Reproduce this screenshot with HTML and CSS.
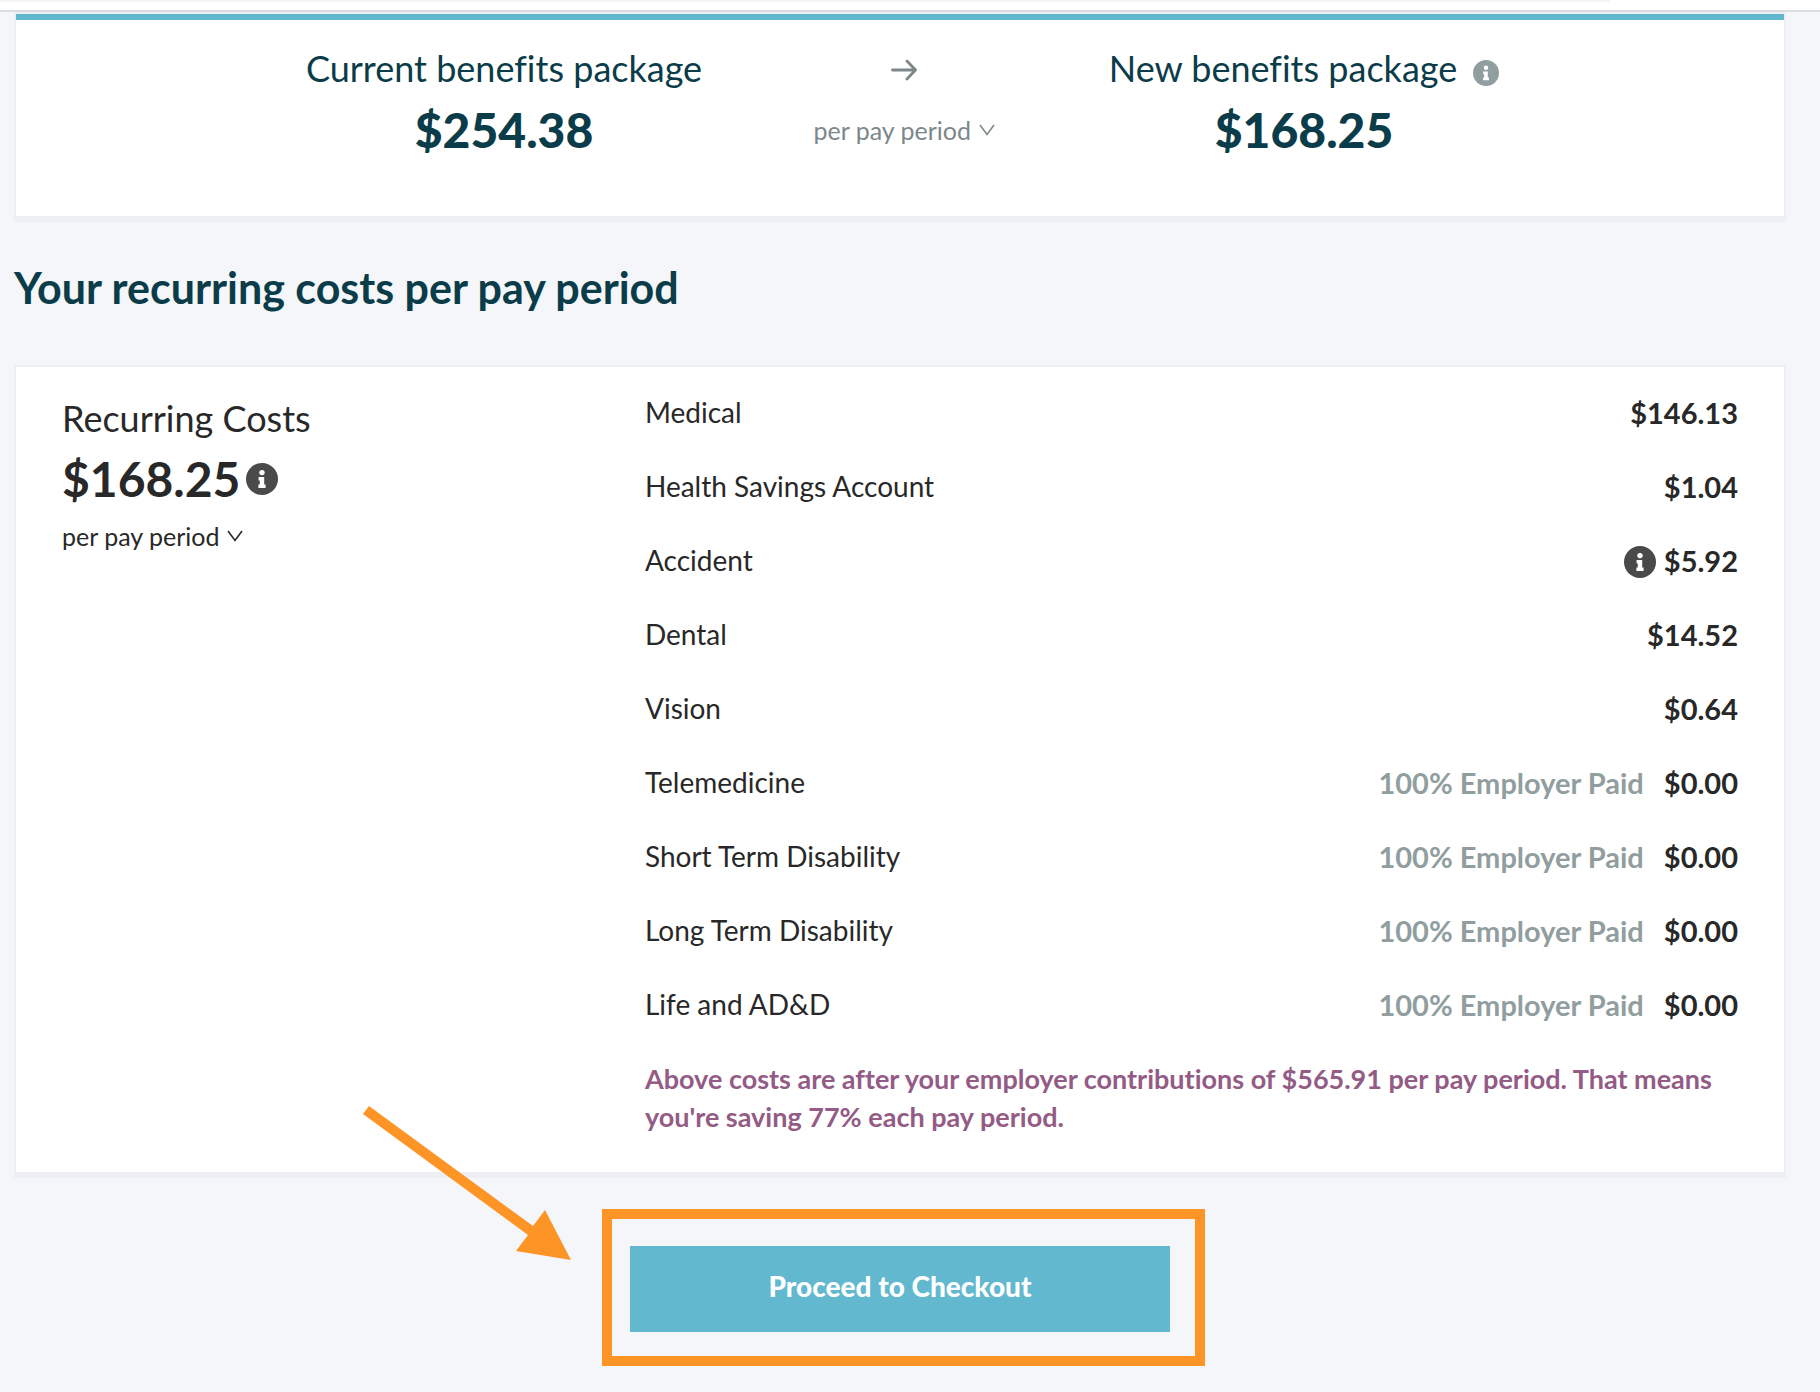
FILE: index.html
```html
<!DOCTYPE html>
<html lang="en">
  <head>
    <meta charset="UTF-8">
    <meta name="viewport" content="width=device-width,initial-scale=1">
    <link rel="stylesheet" href="styles.css">
    <title>Benefits - Review your costs</title>
  </head>
  <body>
    <svg class="sprite" aria-hidden="true">
      <symbol id="icon-info" viewBox="0 0 32 32">
        <circle cx="16" cy="16" r="16" fill="currentColor"/>
        <circle cx="16" cy="9.6" r="2.7" fill="#fff"/>
        <path d="M12.6 14h5.6v7.6h1.4V25h-7.2v-3.4h1.4v-4.2h-1.2z" fill="#fff"/>
      </symbol>
      <symbol id="icon-chevron" viewBox="0 0 16 12">
        <path d="M1 1l7 9.5 7-9.5" fill="none" stroke="currentColor" stroke-width="1.6"/>
      </symbol>
    </svg>
    <div class="browser-bar">
      <div class="address"></div>
    </div>
    <main>
      <section class="card">
        <div class="accent"></div>
        <div class="summary">
          <div class="package">
            <h2>Current benefits package</h2>
            <p class="amount">$254.38</p>
          </div>
          <div class="package between">
            <svg class="arrow-right" viewBox="0 0 26 22" aria-hidden="true">
              <path d="M1.5 11h23M16 2l8.5 9-8.5 9" fill="none" stroke="currentColor" stroke-width="2.8" stroke-linecap="round" stroke-linejoin="round"/>
            </svg>
            <div class="period">
              <select aria-label="Compare costs">
                <option>per pay period</option>
              </select>
              <svg class="chevron"><use href="#icon-chevron"/></svg>
            </div>
          </div>
          <div class="package">
            <h2>New benefits package <svg class="info"><use href="#icon-info"/></svg></h2>
            <p class="amount">$168.25</p>
          </div>
        </div>
      </section>

      <h1>Your recurring costs per pay period</h1>

      <section class="card costs">
        <div class="total">
          <h2>Recurring Costs</h2>
          <p class="amount">$168.25 <svg class="info-lg"><use href="#icon-info"/></svg></p>
          <div class="period">
            <select aria-label="Recurring costs">
              <option>per pay period</option>
            </select>
            <svg class="chevron"><use href="#icon-chevron"/></svg>
          </div>
        </div>
        <div class="breakdown">
          <table>
            <tr>
              <th scope="row">Medical</th>
              <td>$146.13</td>
            </tr>
            <tr>
              <th scope="row">Health Savings Account</th>
              <td>$1.04</td>
            </tr>
            <tr>
              <th scope="row">Accident</th>
              <td><svg class="info-lg"><use href="#icon-info"/></svg>$5.92</td>
            </tr>
            <tr>
              <th scope="row">Dental</th>
              <td>$14.52</td>
            </tr>
            <tr>
              <th scope="row">Vision</th>
              <td>$0.64</td>
            </tr>
            <tr>
              <th scope="row">Telemedicine</th>
              <td><span class="employer-paid">100% Employer Paid</span>$0.00</td>
            </tr>
            <tr>
              <th scope="row">Short Term Disability</th>
              <td><span class="employer-paid">100% Employer Paid</span>$0.00</td>
            </tr>
            <tr>
              <th scope="row">Long Term Disability</th>
              <td><span class="employer-paid">100% Employer Paid</span>$0.00</td>
            </tr>
            <tr>
              <th scope="row">Life and AD&amp;D</th>
              <td><span class="employer-paid">100% Employer Paid</span>$0.00</td>
            </tr>
          </table>
          <p class="savings">Above costs are after your employer contributions of $565.91 per pay period. That means you're saving 77% each pay period.</p>
        </div>
      </section>

      <div class="checkout">
        <button type="button">Proceed to Checkout</button>
        <div class="highlight"></div>
        <svg class="pointer" viewBox="0 0 208 154" aria-hidden="true">
          <path d="M0 8L6 0l164 120 12-16 26 50-55-9 12-16z" fill="#fd9426"/>
        </svg>
      </div>
    </main>
  </body>
</html>
```
FILE: styles.css
```css
* {
  box-sizing: border-box;
}

body {
  background-color: #f4f6fa;
  color: #282828;
  font-family: Lato, sans-serif;
  font-size: 28px;
  font-variant-ligatures: no-common-ligatures;
  margin: 0;
}

h1, h2, p {
  margin: 0;
}

.sprite {
  display: none;
}

.browser-bar {
  height: 12px;
  background-color: #fff;
  border-bottom: 2px solid #dadce0;
}

.address {
  height: 2px;
  margin-right: 210px;
  background-color: #f1f3f4;
  border-bottom-right-radius: 4px;
}

main {
  padding: 0 34px 56px 14px;
}

.card {
  background-color: #fff;
  border: 2px solid #eeeff5;
  border-bottom-width: 6px;
}

.accent {
  height: 6px;
  background-color: #61b8cf;
}

h1 {
  margin: 42px 0 53px;
  color: #0b3c49;
  font-size: 43px;
  line-height: 48px;
  font-weight: 700;
}

h2 {
  font-size: 36px;
  line-height: 40px;
  font-weight: 400;
}

.amount {
  font-size: 48px;
  line-height: 56px;
  font-weight: 700;
}

/* current vs new package */
.summary {
  display: grid;
  grid-template-columns: repeat(3, 400px);
  justify-content: center;
  color: #0b3c49;
  padding: 28px 0 58px 8px;
}

.package {
  display: flex;
  flex-direction: column;
  align-items: center;
  gap: 14px;
}

.package h2 {
  display: flex;
  align-items: center;
  gap: 16px;
  white-space: nowrap;
}

.summary .amount {
  font-weight: 900;
}

.between {
  color: #7c878a;
}

.arrow-right {
  width: 26px;
  height: 22px;
  margin: 11px 0 7px;
}

.info {
  width: 26px;
  height: 26px;
  margin-top: 10px;
  color: #919ea0;
}

.info-lg {
  width: 32px;
  height: 32px;
  color: #4a4a4a;
}

.period {
  display: flex;
  align-items: center;
  gap: 6px;
}

.between .period {
  height: 56px;
}

.period select {
  appearance: none;
  background: none;
  border: none;
  padding: 0;
  color: inherit;
  font: inherit;
  font-size: 25px;
  line-height: 32px;
  cursor: pointer;
}

.chevron {
  width: 16px;
  height: 12px;
  pointer-events: none;
}

/* recurring costs */
.costs {
  display: grid;
  grid-template-columns: 8fr 15fr;
  padding: 8px 46px 36px;
}

.total {
  display: flex;
  flex-direction: column;
  gap: 13px;
  padding-top: 23px;
}

.total .amount {
  display: flex;
  align-items: center;
  gap: 6px;
}

table {
  width: 100%;
  border-collapse: collapse;
}

th, td {
  height: 74px;
  padding: 0;
}

th {
  font-weight: 400;
  text-align: left;
}

td {
  font-size: 29px;
  font-weight: 700;
  text-align: right;
}

td .info-lg {
  margin-right: 8px;
  vertical-align: -6px;
}

.employer-paid {
  margin-right: 20px;
  color: #919ea0;
}

.savings {
  margin-top: 19px;
  color: #935b85;
  font-size: 27px;
  line-height: 38px;
  font-weight: 700;
}

.checkout {
  position: relative;
  width: 540px;
  max-width: 100%;
  margin: 68px auto 0;
}

.checkout button {
  width: 100%;
  height: 86px;
  background-color: #61b8cf;
  color: #fff;
  border: none;
  padding: 0 0 6px;
  font-family: inherit;
  font-size: 28px;
  font-weight: 900;
  cursor: pointer;
}

.highlight {
  position: absolute;
  top: -37px;
  right: -35px;
  bottom: -34px;
  left: -28px;
  border: 10px solid #fd9426;
  pointer-events: none;
}

.pointer {
  position: absolute;
  top: -140px;
  left: -267px;
  width: 208px;
  height: 154px;
}
```
